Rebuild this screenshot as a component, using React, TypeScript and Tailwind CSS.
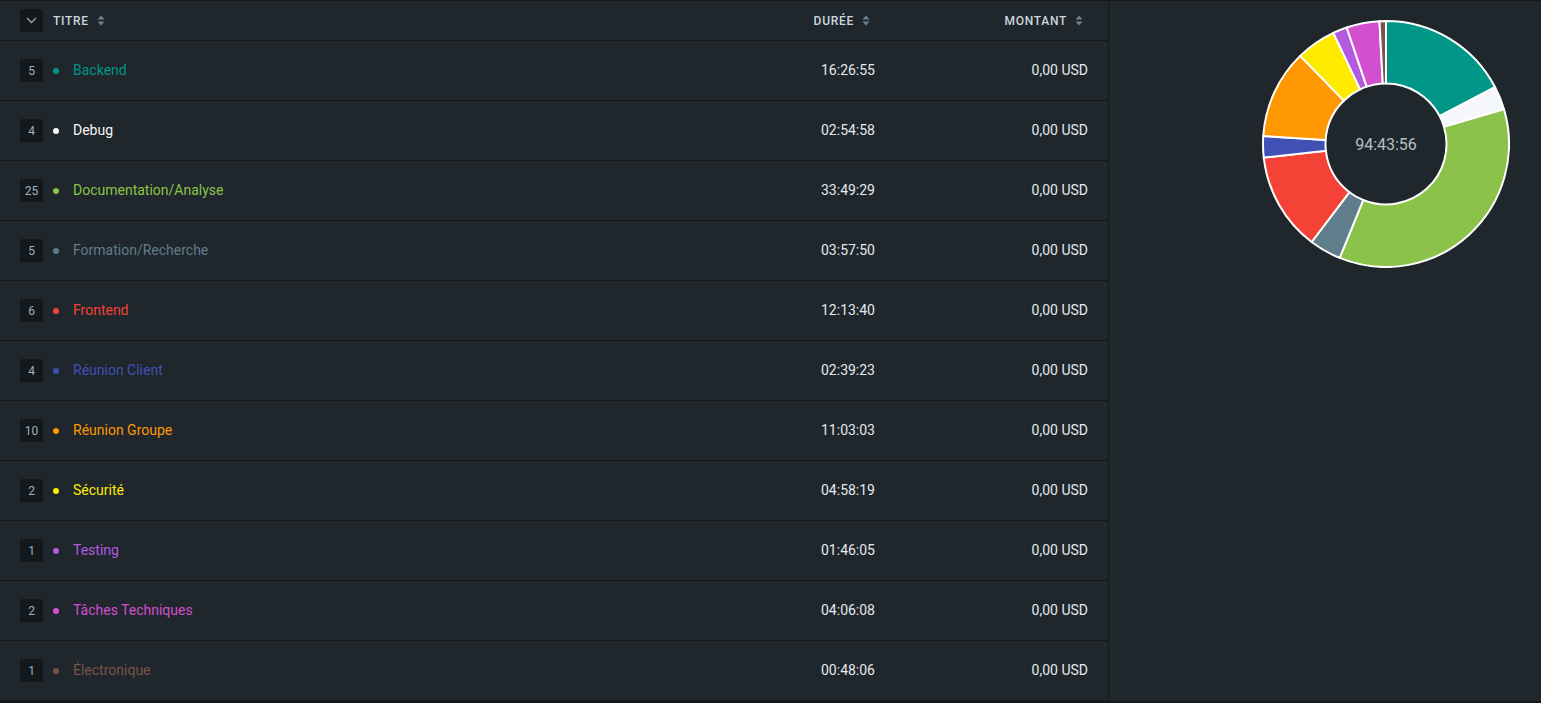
import React from "react";

interface Row {
  count: number;
  title: string;
  color: string;
  duration: string;
}

const rows: Row[] = [
  { count: 5, title: "Backend", color: "#009688", duration: "16:26:55" },
  { count: 4, title: "Debug", color: "#f5f7fa", duration: "02:54:58" },
  { count: 25, title: "Documentation/Analyse", color: "#8bc34a", duration: "33:49:29" },
  { count: 5, title: "Formation/Recherche", color: "#607d8b", duration: "03:57:50" },
  { count: 6, title: "Frontend", color: "#f44336", duration: "12:13:40" },
  { count: 4, title: "Réunion Client", color: "#3f51b5", duration: "02:39:23" },
  { count: 10, title: "Réunion Groupe", color: "#ff9800", duration: "11:03:03" },
  { count: 2, title: "Sécurité", color: "#ffeb00", duration: "04:58:19" },
  { count: 1, title: "Testing", color: "#b25ae0", duration: "01:46:05" },
  { count: 2, title: "Tâches Techniques", color: "#d24fcf", duration: "04:06:08" },
  { count: 1, title: "Électronique", color: "#795548", duration: "00:48:06" },
];

const toSeconds = (d: string) => {
  const [h, m, s] = d.split(":").map(Number);
  return h * 3600 + m * 60 + s;
};

function SortIcon() {
  return (
    <svg width="8" height="11" viewBox="0 0 8 11" className="ml-[8px]">
      <path d="M4 0.5 L7.5 4.5 L0.5 4.5 Z" fill="#6f818f" />
      <path d="M4 10.5 L7.5 6.5 L0.5 6.5 Z" fill="#6f818f" />
    </svg>
  );
}

function Donut() {
  const cx = 124;
  const cy = 124;
  const R = 123;
  const r = 60.5;
  const total = rows.reduce((a, b) => a + toSeconds(b.duration), 0);
  let start = 0;
  const pt = (rad: number, a: number) => [
    cx + rad * Math.sin(a),
    cy - rad * Math.cos(a),
  ];
  return (
    <svg width="248" height="248" viewBox="0 0 248 248">
      {rows.map((row) => {
        const frac = toSeconds(row.duration) / total;
        const a0 = start * 2 * Math.PI;
        const a1 = (start + frac) * 2 * Math.PI;
        start += frac;
        const large = a1 - a0 > Math.PI ? 1 : 0;
        const [x0, y0] = pt(R, a0);
        const [x1, y1] = pt(R, a1);
        const [x2, y2] = pt(r, a1);
        const [x3, y3] = pt(r, a0);
        const d = `M${x0} ${y0} A${R} ${R} 0 ${large} 1 ${x1} ${y1} L${x2} ${y2} A${r} ${r} 0 ${large} 0 ${x3} ${y3} Z`;
        return (
          <path
            key={row.title}
            d={d}
            fill={row.color}
            stroke="#ffffff"
            strokeWidth="2"
            strokeLinejoin="round"
          />
        );
      })}
      <text
        x={cx}
        y={cy + 6}
        textAnchor="middle"
        fill="#b4c0c8"
        fontSize="16"
        fontFamily="Roboto, sans-serif"
      >
        94:43:56
      </text>
    </svg>
  );
}

export default function App() {
  return (
    <div
      className="flex w-[1541px] h-[703px] bg-[#1f262c] border-t border-b-2 border-[#13181b] overflow-hidden"
      style={{ fontFamily: "Roboto, 'Liberation Sans', sans-serif" }}
    >
      {/* Table */}
      <div className="w-[1109px] border-r border-[#13181b] flex flex-col">
        <div className="h-[40px] shrink-0 flex items-center border-b border-[#13181b] text-[12px] font-medium tracking-[0.06em] text-[#cdd6de] uppercase">
          <div className="flex-1 flex items-center pl-[20px]">
            <div className="w-[23px] h-[23px] rounded-[2px] bg-[#12181b] flex items-center justify-center">
              <svg width="11" height="7" viewBox="0 0 11 7">
                <path d="M1 1 L5.5 5.5 L10 1" stroke="#9aa7b1" strokeWidth="1.3" fill="none" />
              </svg>
            </div>
            <span className="ml-[10px]">Titre</span>
            <SortIcon />
          </div>
          <div className="w-[200px] flex items-center justify-end pr-[25px]">
            <span>Durée</span>
            <SortIcon />
          </div>
          <div className="w-[213px] flex items-center justify-end pr-[25px]">
            <span>Montant</span>
            <SortIcon />
          </div>
        </div>

        {rows.map((row) => (
          <div
            key={row.title}
            className="h-[60px] shrink-0 flex items-center border-b border-[#13181b] text-[14px]"
          >
            <div className="flex-1 flex items-center pl-[20px]">
              <div className="w-[23px] h-[23px] rounded-[2px] bg-[#12181b] flex items-center justify-center text-[12px] text-[#9fb2c0]">
                {row.count}
              </div>
              <span
                className="ml-[10px] w-[6px] h-[6px] rounded-full"
                style={{ backgroundColor: row.color }}
              />
              <span className="ml-[14px]" style={{ color: row.color }}>
                {row.title}
              </span>
            </div>
            <div className="w-[200px] text-right pr-[20px] text-[#e3e9ee]">
              {row.duration}
            </div>
            <div className="w-[213px] text-right pr-[20px] text-[#e3e9ee]">
              0,00 USD
            </div>
          </div>
        ))}
      </div>

      {/* Chart */}
      <div className="flex-1 flex justify-end items-start pt-[19px] pr-[31px]">
        <Donut />
      </div>
    </div>
  );
}
